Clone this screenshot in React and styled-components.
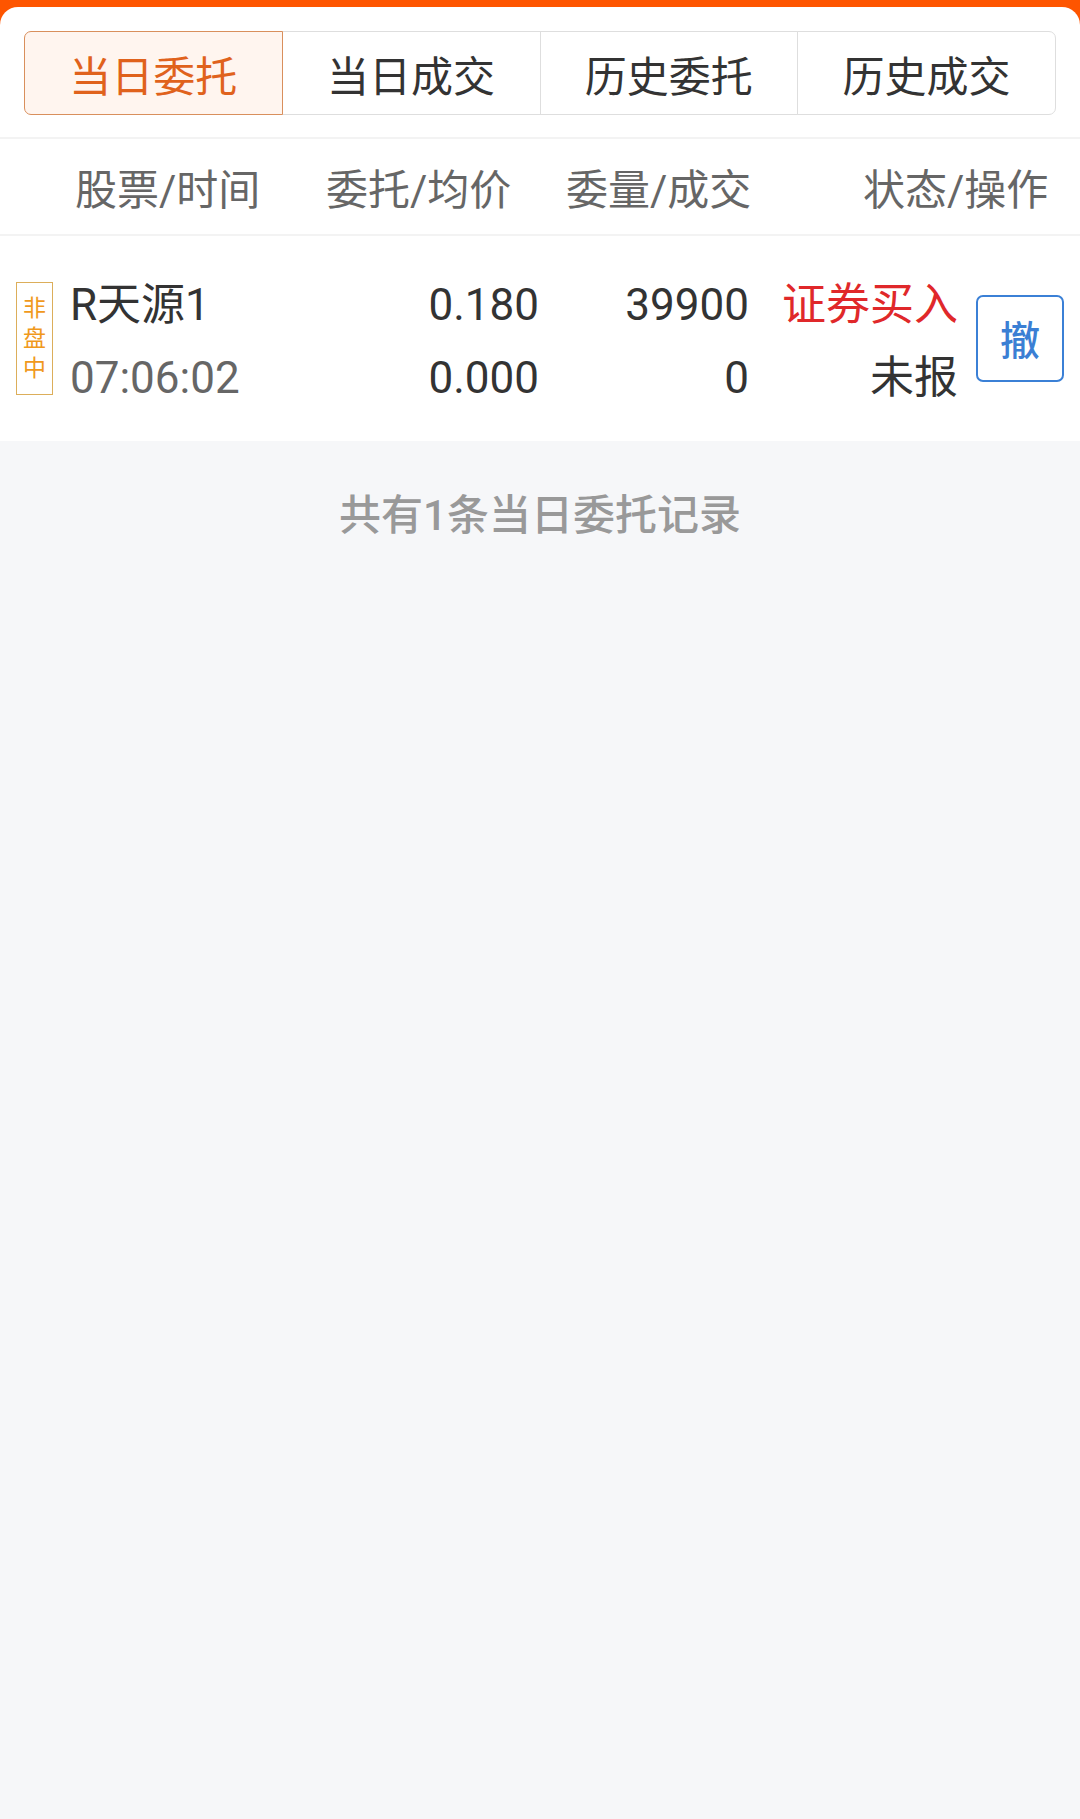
import React from "react";
import styled, { createGlobalStyle } from "styled-components";

const tabs = ["当日委托", "当日成交", "历史委托", "历史成交"];

const orders = [
    {
        session: ["非", "盘", "中"],
        name: "R天源1",
        time: "07:06:02",
        price: "0.180",
        avg: "0.000",
        qty: "39900",
        filled: "0",
        side: "证券买入",
        status: "未报",
    },
];

const App = () => {
    return (
        <Page>
            <GlobalStyle />
            <Card>
                <TabSection>
                    <TabBar>
                        {tabs.map((t, i) => (
                            <Tab key={t} $active={i === 0} $first={i === 0} $last={i === tabs.length - 1}>
                                {t}
                            </Tab>
                        ))}
                    </TabBar>
                </TabSection>

                <HeaderRow>
                    <HeadCell>股票/时间</HeadCell>
                    <HeadCell>委托/均价</HeadCell>
                    <HeadCell>委量/成交</HeadCell>
                    <HeadCell>状态/操作</HeadCell>
                </HeaderRow>

                {orders.map((o) => (
                    <OrderRow key={o.name + o.time}>
                        <SessionBadge>
                            {o.session.map((c) => (
                                <span key={c}>{c}</span>
                            ))}
                        </SessionBadge>
                        <NameCell>
                            <Line>{o.name}</Line>
                            <Line $muted>{o.time}</Line>
                        </NameCell>
                        <NumCell $width={169}>
                            <Line>{o.price}</Line>
                            <Line>{o.avg}</Line>
                        </NumCell>
                        <NumCell $width={210}>
                            <Line>{o.qty}</Line>
                            <Line>{o.filled}</Line>
                        </NumCell>
                        <NumCell $width={209}>
                            <Line $red>{o.side}</Line>
                            <Line>{o.status}</Line>
                        </NumCell>
                        <CancelButton>撤</CancelButton>
                    </OrderRow>
                ))}
            </Card>

            <Footer>共有1条当日委托记录</Footer>
        </Page>
    );
};

export default App;

// Styled Components

const GlobalStyle = createGlobalStyle`
    html, body {
        margin: 0;
        padding: 0;
        background: #f6f7f9;
    }
    body {
        font-family: Roboto, "Noto Sans CJK SC", sans-serif;
        -webkit-font-smoothing: antialiased;
    }
`;

const Page = styled.div`
    min-height: 1819px;
    background: linear-gradient(#fe5500 0, #fe5500 30px, #f6f7f9 30px);
    padding-top: 7px;
    box-sizing: border-box;
`;

const Card = styled.div`
    background: #ffffff;
    border-radius: 18px 18px 0 0;
`;

const TabSection = styled.div`
    padding: 24px 24px 22px;
    border-bottom: 2px solid #f3f3f3;
`;

const TabBar = styled.div`
    display: flex;
    height: 84px;
`;

const Tab = styled.div`
    flex: 1;
    display: flex;
    align-items: center;
    justify-content: center;
    box-sizing: border-box;
    margin-left: ${(p) => (p.$first ? "0" : "-1px")};
    border: 1px solid ${(p) => (p.$active ? "#d98f5c" : "#dedede")};
    border-radius: ${(p) => (p.$first ? "7px 0 0 7px" : p.$last ? "0 7px 7px 0" : "0")};
    background: ${(p) => (p.$active ? "#fff5ef" : "#ffffff")};
    color: ${(p) => (p.$active ? "#e0621c" : "#333333")};
    position: relative;
    z-index: ${(p) => (p.$active ? 1 : 0)};
    font-size: 42px;
`;

const HeaderRow = styled.div`
    display: grid;
    grid-template-columns: 251px 240px 297px auto;
    align-items: center;
    height: 95px;
    padding-left: 75px;
    border-bottom: 2px solid #f3f3f3;
`;

const HeadCell = styled.div`
    font-size: 42px;
    color: #666666;
    white-space: nowrap;
`;

const OrderRow = styled.div`
    display: flex;
    align-items: center;
    height: 205px;
    box-sizing: border-box;
    padding: 6px 16px 0;
`;

const SessionBadge = styled.div`
    width: 37px;
    height: 113px;
    box-sizing: border-box;
    border: 1.5px solid #dcae5a;
    display: flex;
    flex-direction: column;
    align-items: center;
    justify-content: center;
    color: #f0991c;
    font-size: 23px;
    line-height: 30px;
    margin-right: 17px;
    margin-bottom: 6px;
`;

const NameCell = styled.div`
    width: 300px;
    display: flex;
    flex-direction: column;
`;

const NumCell = styled.div`
    width: ${(p) => p.$width}px;
    display: flex;
    flex-direction: column;
    align-items: flex-end;
`;

const Line = styled.div`
    font-size: 44px;
    line-height: 73px;
    white-space: nowrap;
    color: ${(p) => (p.$red ? "#e0282a" : p.$muted ? "#666666" : "#333333")};
`;

const CancelButton = styled.button`
    width: 88px;
    height: 87px;
    margin-left: 18px;
    margin-bottom: 7px;
    box-sizing: border-box;
    border: 2.5px solid #3b80d6;
    border-radius: 7px;
    background: #ffffff;
    color: #3b7fd4;
    font-family: Roboto, "Noto Sans CJK SC", sans-serif;
    font-size: 40px;
    font-weight: 500;
    padding: 0;
    cursor: pointer;
`;

const Footer = styled.div`
    text-align: center;
    color: #999999;
    font-size: 42px;
    font-weight: 500;
    padding-top: 47px;
    line-height: 56px;
`;
